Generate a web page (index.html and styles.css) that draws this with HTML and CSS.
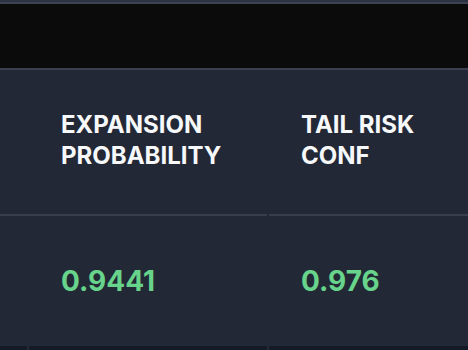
FILE: index.html
```html
<!DOCTYPE html>
<html>
<head>
<meta charset="utf-8">
<link rel="stylesheet" href="styles.css">
</head>
<body>
<div class="page">
  <div class="top-strip"></div>
  <div class="top-line"></div>
  <div class="black-bar"></div>
  <div class="table">
    <div class="row head">
      <div class="cell"></div>
      <div class="cell"><span class="label">EXPANSION<br>PROBABILITY</span></div>
      <div class="cell"><span class="label">TAIL RISK<br>CONF</span></div>
    </div>
    <div class="row body">
      <div class="cell"></div>
      <div class="cell"><span class="value">0.9441</span></div>
      <div class="cell"><span class="value">0.976</span></div>
    </div>
    <div class="row next">
      <div class="cell"></div>
      <div class="cell"></div>
      <div class="cell"></div>
    </div>
  </div>
</div>
</body>
</html>
```
FILE: styles.css
```css
html, body {
  margin: 0;
  padding: 0;
  background: #222836;
  overflow: hidden;
}
.page {
  width: 468px;
  height: 350px;
  overflow: hidden;
  font-family: Inter, "Noto Sans", sans-serif;
}
.top-strip {
  height: 2px;
  background: #2c3242;
}
.top-line {
  height: 2px;
  background: #3c4353;
}
.black-bar {
  height: 64px;
  background: #0b0b0b;
  border-bottom: 2px solid #3a404f;
}
.table {
  display: flex;
  flex-direction: column;
  background: #222836;
}
.row {
  display: grid;
  grid-template-columns: 27px 238px 238px;
  column-gap: 2px;
}
.cell {
  background: #222836;
  box-sizing: border-box;
}
.head .cell {
  height: 146px;
  border-bottom: 2px solid #373e4d;
  padding: 39px 32px 0;
}
.body .cell {
  height: 130px;
  padding: 44px 32px 0;
}
.next .cell {
  height: 20px;
  background: #141a28;
}
.label {
  display: block;
  color: #f7f8fa;
  font-weight: 700;
  font-size: 24px;
  line-height: 31px;
  white-space: nowrap;
}
.value {
  display: block;
  color: #68d38b;
  font-weight: 700;
  font-size: 28px;
  line-height: 42px;
}
```
